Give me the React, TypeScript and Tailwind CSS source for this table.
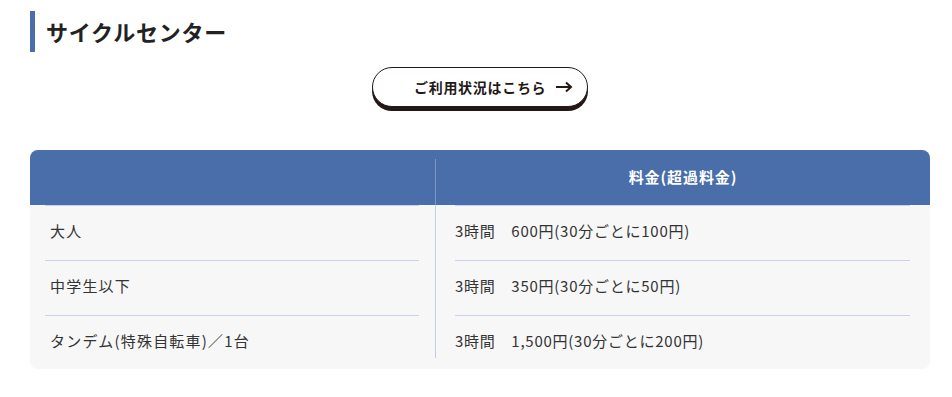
const rows = [
  { label: "大人", fee: "3時間　600円(30分ごとに100円)" },
  { label: "中学生以下", fee: "3時間　350円(30分ごとに50円)" },
  { label: "タンデム(特殊自転車)／1台", fee: "3時間　1,500円(30分ごとに200円)" },
];

function ArrowRight() {
  return (
    <svg width="17" height="12" viewBox="0 0 17 12" fill="none" stroke="#231815" strokeWidth="2">
      <path d="M0 6h15" />
      <path d="M10 1.5l5 4.5-5 4.5" />
    </svg>
  );
}

export default function App() {
  return (
    <div
      className="w-[952px] h-[397px] bg-white pt-[11px] text-[#333]"
      style={{ fontFamily: '"Noto Sans CJK JP", "Noto Sans", sans-serif' }}
    >
      <div className="ml-[30px] w-[900px]">
        <h2 className="flex h-[41px] items-center border-l-[5px] border-[#4a6ea9] pl-[11px] text-[22px] font-bold tracking-[0.75px] text-[#222]">
          サイクルセンター
        </h2>

        <div className="mt-[15px] flex justify-center">
          <button className="flex h-[40px] w-[216px] items-center gap-[10px] rounded-full border border-[#231815] bg-white pl-[41px] text-[14px] font-bold tracking-[0.05em] text-[#231815] shadow-[0_4px_0_#231815]">
            ご利用状況はこちら
            <ArrowRight />
          </button>
        </div>

        <div className="mt-[43px] grid grid-cols-[405px_1px_1fr] grid-rows-[55px_55px_55px_54px] overflow-hidden rounded-lg bg-[#f7f7f7] text-[15px] tracking-[0.05em]">
          <div className="col-start-1 col-end-4 row-start-1 bg-[#4a6ea9]" />
          <div className="col-start-3 row-start-1 flex items-center justify-center font-bold tracking-[0.9px] text-white">
            料金(超過料金)
          </div>
          <div className="col-start-2 row-start-1 row-end-5 pt-[9px] pb-[11px]">
            <div className="h-full w-px bg-[rgba(160,178,215,0.6)]" />
          </div>
          {rows.map((r, i) => (
            <div key={r.label} className="contents">
              <div className={`col-start-1 ${i === 0 ? "row-start-2" : i === 1 ? "row-start-3" : "row-start-4"} pl-[15px] pr-[16px]`}>
                <div className="flex h-[55px] items-center border-t border-[#c9d2ea] pl-[5px] pb-[4px] tracking-[0.08em]">{r.label}</div>
              </div>
              <div className={`col-start-3 ${i === 0 ? "row-start-2" : i === 1 ? "row-start-3" : "row-start-4"} pl-[19px] pr-[20px]`}>
                <div className="flex h-[55px] items-center border-t border-[#c9d2ea] pb-[4px]">{r.fee}</div>
              </div>
            </div>
          ))}
        </div>
      </div>
    </div>
  );
}
